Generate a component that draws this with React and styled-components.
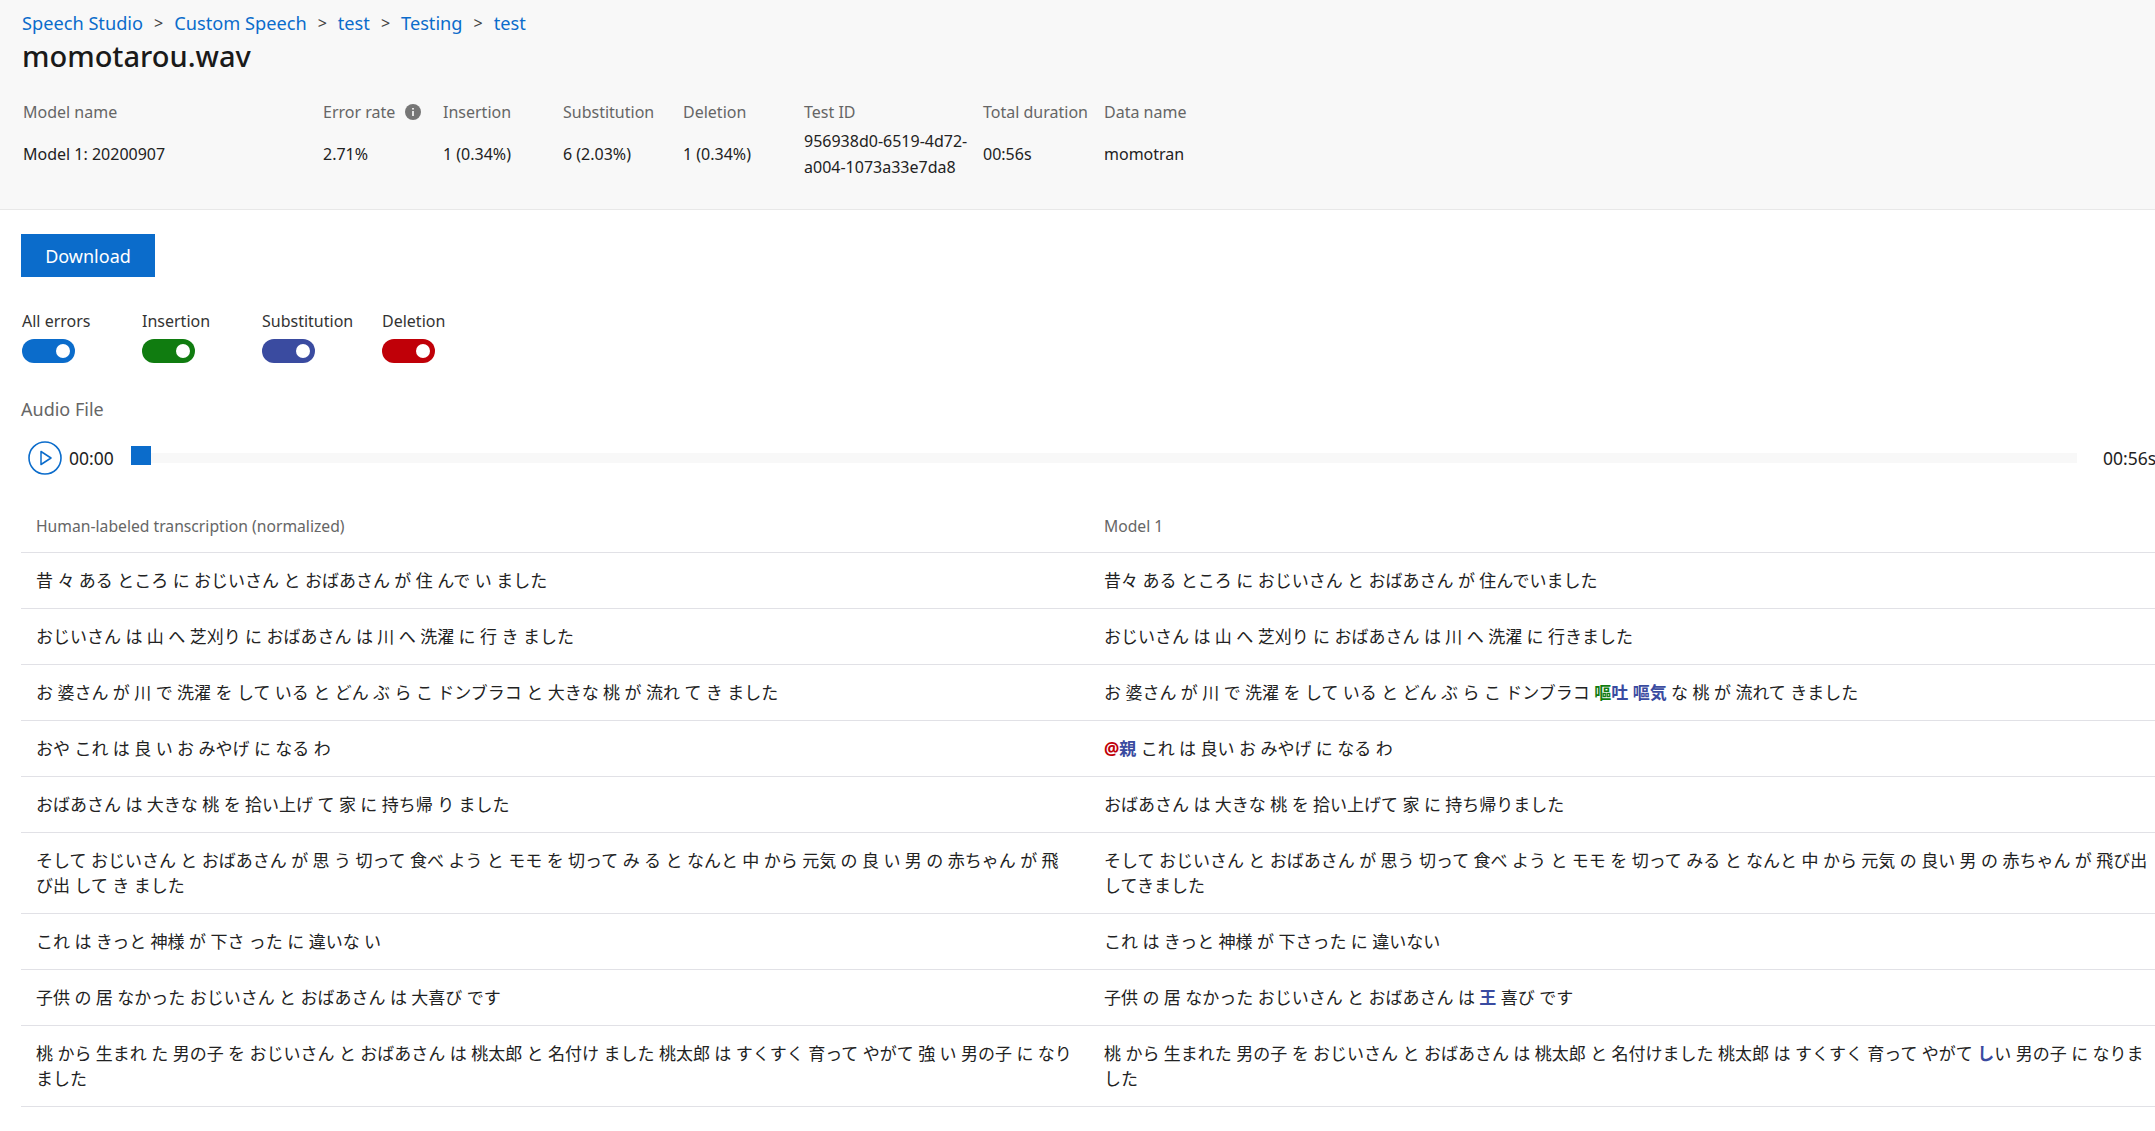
import React from "react";
import styled, { createGlobalStyle } from "styled-components";

const FONT = '"Noto Sans", "Noto Sans CJK JP", sans-serif';
const BLUE = "#0b6ccb";
const INS = "#107c10";
const SUB = "#3a4ba0";
const DEL = "#c00008";

const GlobalStyle = createGlobalStyle`
  html, body {
    margin: 0;
    padding: 0;
    background: #fff;
    overflow: hidden;
  }
  body {
    font-family: ${FONT};
    color: #222;
  }
`;

const Page = styled.div`
  width: 2155px;
  height: 1131px;
  overflow: hidden;
`;

const Header = styled.header`
  height: 209px;
  box-sizing: content-box;
  padding: 0 0 0 22px;
  background: #f8f8f8;
  border-bottom: 1px solid #e8e8e8;
`;

const Breadcrumb = styled.nav`
  display: flex;
  align-items: center;
  padding-top: 10px;
  height: 26px;
  font-size: 18.2px;
  line-height: 26px;
`;

const Crumb = styled.a`
  color: ${BLUE};
  text-decoration: none;
`;

const Sep = styled.span`
  color: #444;
  margin: 0 11px;
  font-size: 16px;
`;

const Title = styled.h1`
  margin: 1px 0 0;
  font-size: 29px;
  line-height: 38px;
  font-weight: 500;
  color: #1a1a1a;
`;

const MetaGrid = styled.div`
  display: grid;
  grid-template-columns: 300px 120px 120px 120px 121px 179px 121px auto;
  margin: 24px 0 0 1px;
  justify-content: start;
`;

const MetaLabel = styled.div`
  display: flex;
  align-items: center;
  gap: 10px;
  height: 26px;
  font-size: 16px;
  line-height: 26px;
  color: #666;
  white-space: nowrap;
`;

const MetaValue = styled.div`
  display: flex;
  align-items: center;
  height: 52px;
  margin-top: 3px;
  font-size: 16px;
  line-height: 26px;
  color: #222;
  white-space: ${(p) => (p.$wrap ? "normal" : "nowrap")};
`;

const Main = styled.main`
  padding: 24px 0 0 21px;
`;

const DownloadButton = styled.button`
  display: block;
  width: 134px;
  height: 43px;
  border: 0;
  padding: 0;
  background: ${BLUE};
  color: #fff;
  font-family: ${FONT};
  font-size: 18px;
  cursor: pointer;
`;

const Filters = styled.div`
  display: flex;
  margin-top: 31px;
  padding-left: 1px;
`;

const Filter = styled.div`
  width: 120px;
`;

const FilterLabel = styled.div`
  font-size: 16px;
  line-height: 26px;
  color: #333;
  white-space: nowrap;
`;

const Toggle = styled.div`
  position: relative;
  width: 53px;
  height: 24px;
  margin-top: 5px;
  border-radius: 12px;
  background: ${(p) => p.$color};

  &::after {
    content: "";
    position: absolute;
    top: 5px;
    right: 5px;
    width: 14px;
    height: 14px;
    border-radius: 50%;
    background: #fff;
  }
`;

const SectionTitle = styled.h2`
  margin: 33px 0 0;
  font-size: 18px;
  line-height: 26px;
  font-weight: 400;
  color: #666;
`;

const Player = styled.div`
  display: flex;
  align-items: center;
  width: calc(100% + 25px);
  height: 34px;
  margin-top: 19px;
  padding-left: 7px;
  box-sizing: border-box;
`;

const PlayIcon = styled.svg`
  flex: none;
  width: 34px;
  height: 34px;
`;

const Time = styled.span`
  flex: none;
  width: 62px;
  margin-left: 7px;
  font-size: 17.5px;
  color: #222;
`;

const Track = styled.div`
  position: relative;
  flex: 1;
  height: 10px;
  background: #f8f8f8;
`;

const Thumb = styled.div`
  position: absolute;
  left: 0;
  top: -7px;
  width: 20px;
  height: 19px;
  background: ${BLUE};
`;

const Duration = styled(Time)`
  width: 77px;
  margin-left: 26px;
`;

const Table = styled.div`
  margin-top: 39px;
`;

const Row = styled.div`
  display: grid;
  grid-template-columns: 1068px 1fr;
  border-bottom: 1px solid #e1e1e6;
`;

const HeadCell = styled.div`
  padding: 0 15px 13px;
  font-size: 15.7px;
  line-height: 25px;
  color: #666;
`;

const Cell = styled.div`
  padding: 15px;
  font-size: 17px;
  line-height: 25px;
  color: #222;

  &:last-child {
    padding-right: 5px;
  }
`;

const Mark = styled.b`
  font-weight: 700;
  color: ${(p) => p.$color};
`;

const FILTERS = [
  { label: "All errors", color: BLUE },
  { label: "Insertion", color: INS },
  { label: "Substitution", color: SUB },
  { label: "Deletion", color: DEL },
];

const ROWS = [
  ["昔 々 ある ところ に おじいさん と おばあさん が 住 んで い ました", "昔々 ある ところ に おじいさん と おばあさん が 住んでいました"],
  ["おじいさん は 山 へ 芝刈り に おばあさん は 川 へ 洗濯 に 行 き ました", "おじいさん は 山 へ 芝刈り に おばあさん は 川 へ 洗濯 に 行きました"],
  [
    "お 婆さん が 川 で 洗濯 を して いる と どん ぶ ら こ ドンブラコ と 大きな 桃 が 流れ て き ました",
    <>
      お 婆さん が 川 で 洗濯 を して いる と どん ぶ ら こ ドンブラコ <Mark $color={INS}>嘔</Mark>
      <Mark $color={SUB}>吐</Mark> <Mark $color={SUB}>嘔気</Mark> な 桃 が 流れて きました
    </>,
  ],
  [
    "おや これ は 良 い お みやげ に なる わ",
    <>
      <Mark $color={DEL}>@</Mark>
      <Mark $color={SUB}>親</Mark> これ は 良い お みやげ に なる わ
    </>,
  ],
  ["おばあさん は 大きな 桃 を 拾い上げ て 家 に 持ち帰 り ました", "おばあさん は 大きな 桃 を 拾い上げて 家 に 持ち帰りました"],
  [
    "そして おじいさん と おばあさん が 思 う 切って 食べ よう と モモ を 切って み る と なんと 中 から 元気 の 良 い 男 の 赤ちゃん が 飛び出 して き ました",
    "そして おじいさん と おばあさん が 思う 切って 食べ よう と モモ を 切って みる と なんと 中 から 元気 の 良い 男 の 赤ちゃん が 飛び出 してきました",
  ],
  ["これ は きっと 神様 が 下さ った に 違いな い", "これ は きっと 神様 が 下さった に 違いない"],
  [
    "子供 の 居 なかった おじいさん と おばあさん は 大喜び です",
    <>
      子供 の 居 なかった おじいさん と おばあさん は <Mark $color={SUB}>王</Mark> 喜び です
    </>,
  ],
  [
    "桃 から 生まれ た 男の子 を おじいさん と おばあさん は 桃太郎 と 名付け ました 桃太郎 は すくすく 育って やがて 強 い 男の子 に なり ました",
    <>
      桃 から 生まれた 男の子 を おじいさん と おばあさん は 桃太郎 と 名付けました 桃太郎 は すくすく 育って やがて <Mark $color={SUB}>し</Mark>い 男の子 に なりました
    </>,
  ],
];

const InfoIcon = () => (
  <svg width="16" height="16" viewBox="0 0 16 16">
    <circle cx="8" cy="8" r="8" fill="#767676" />
    <rect x="7.2" y="7" width="1.6" height="5" fill="#fff" />
    <rect x="7.2" y="4" width="1.6" height="1.6" fill="#fff" />
  </svg>
);

const App = () => (
  <Page>
    <GlobalStyle />
    <Header>
      <Breadcrumb>
        <Crumb href="#">Speech Studio</Crumb>
        <Sep>&gt;</Sep>
        <Crumb href="#">Custom Speech</Crumb>
        <Sep>&gt;</Sep>
        <Crumb href="#">test</Crumb>
        <Sep>&gt;</Sep>
        <Crumb href="#">Testing</Crumb>
        <Sep>&gt;</Sep>
        <Crumb href="#">test</Crumb>
      </Breadcrumb>
      <Title>momotarou.wav</Title>
      <MetaGrid>
        <MetaLabel>Model name</MetaLabel>
        <MetaLabel>
          Error rate <InfoIcon />
        </MetaLabel>
        <MetaLabel>Insertion</MetaLabel>
        <MetaLabel>Substitution</MetaLabel>
        <MetaLabel>Deletion</MetaLabel>
        <MetaLabel>Test ID</MetaLabel>
        <MetaLabel>Total duration</MetaLabel>
        <MetaLabel>Data name</MetaLabel>
        <MetaValue>Model 1: 20200907</MetaValue>
        <MetaValue>2.71%</MetaValue>
        <MetaValue>1 (0.34%)</MetaValue>
        <MetaValue>6 (2.03%)</MetaValue>
        <MetaValue>1 (0.34%)</MetaValue>
        <MetaValue $wrap>
          956938d0-6519-4d72-
          <br />
          a004-1073a33e7da8
        </MetaValue>
        <MetaValue>00:56s</MetaValue>
        <MetaValue>momotran</MetaValue>
      </MetaGrid>
    </Header>
    <Main>
      <DownloadButton>Download</DownloadButton>
      <Filters>
        {FILTERS.map((f) => (
          <Filter key={f.label}>
            <FilterLabel>{f.label}</FilterLabel>
            <Toggle $color={f.color} />
          </Filter>
        ))}
      </Filters>
      <SectionTitle>Audio File</SectionTitle>
      <Player>
        <PlayIcon viewBox="0 0 34 34" fill="none" stroke={BLUE}>
          <circle cx="17" cy="17" r="16" strokeWidth="1.6" />
          <path d="M13 10.5 L23 17 L13 23.5 Z" strokeWidth="1.5" strokeLinejoin="round" />
        </PlayIcon>
        <Time>00:00</Time>
        <Track>
          <Thumb />
        </Track>
        <Duration>00:56s</Duration>
      </Player>
      <Table>
        <Row>
          <HeadCell>Human-labeled transcription (normalized)</HeadCell>
          <HeadCell>Model 1</HeadCell>
        </Row>
        {ROWS.map((r, i) => (
          <Row key={i}>
            <Cell>{r[0]}</Cell>
            <Cell>{r[1]}</Cell>
          </Row>
        ))}
      </Table>
    </Main>
  </Page>
);

export default App;
